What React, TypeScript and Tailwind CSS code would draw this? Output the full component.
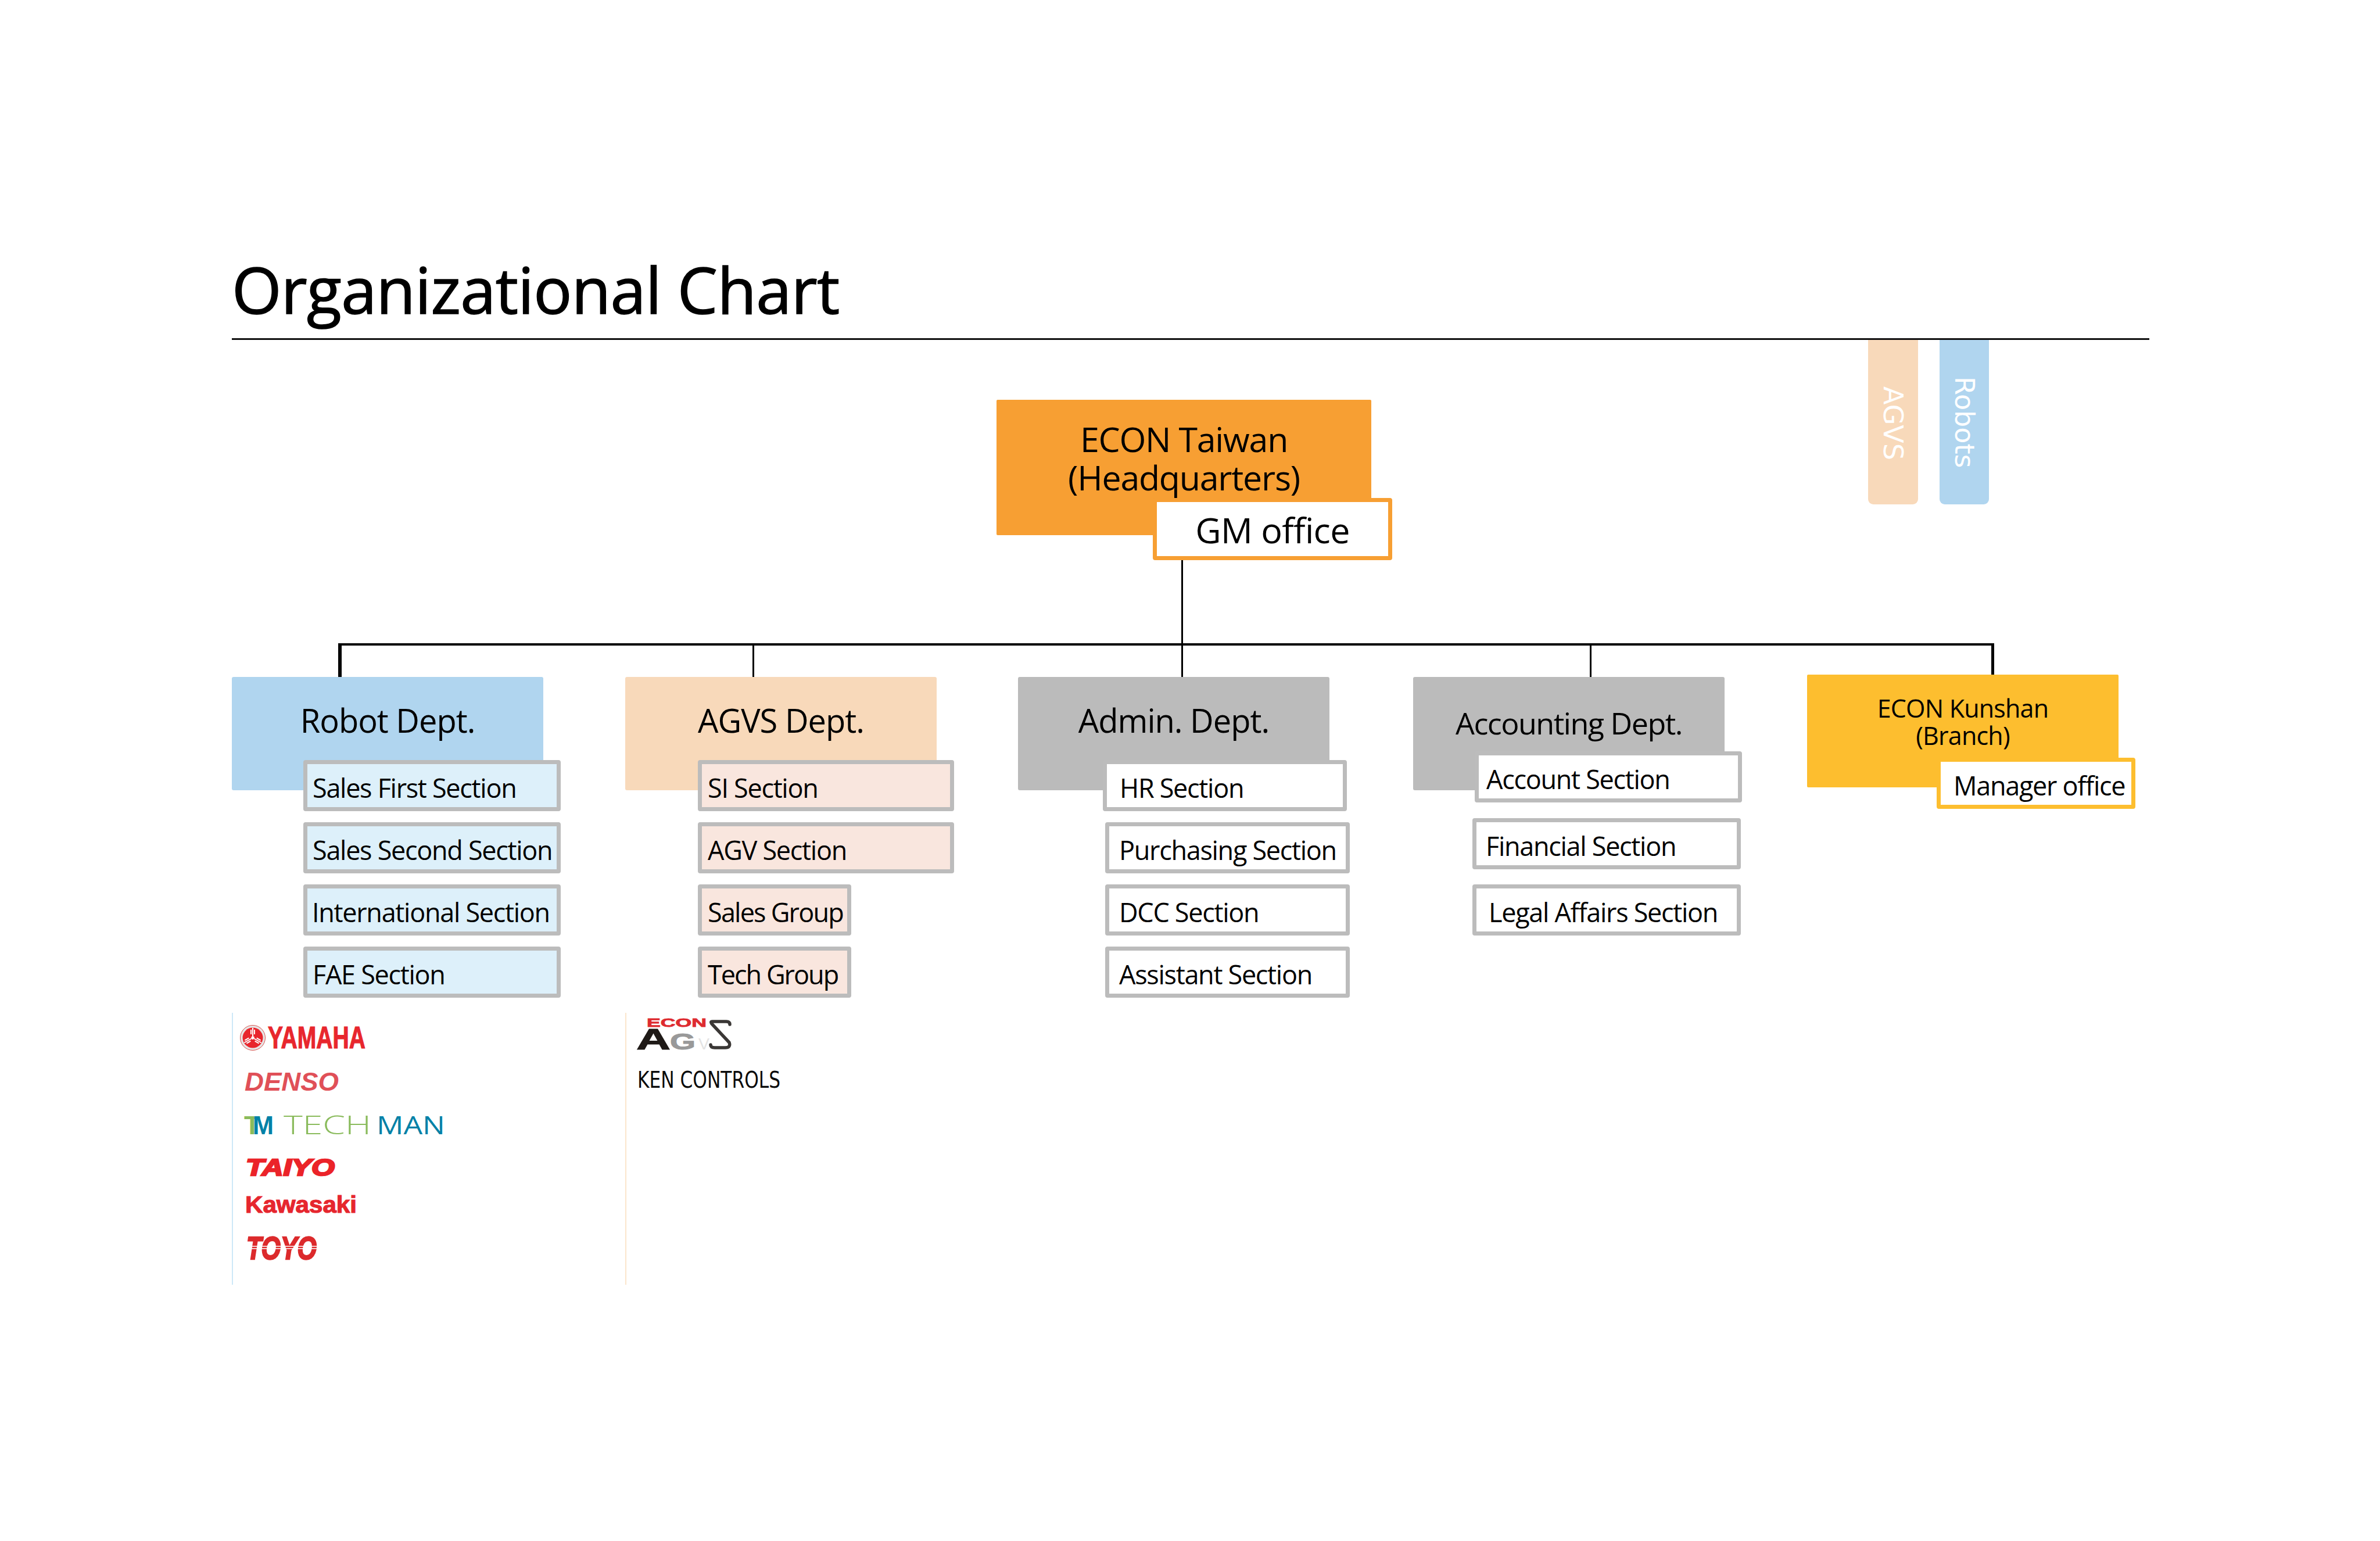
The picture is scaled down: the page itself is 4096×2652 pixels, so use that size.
const Section = ({ className, children }: { className: string; children: React.ReactNode }) => (
  <div className={`flex items-center h-[88px] rounded-[4px] border-[7px] pt-[7px] text-[45px] tracking-[-1.3px] text-black whitespace-nowrap ${className}`}>
    {children}
  </div>
);

const Dept = ({ className, children }: { className: string; children: React.ReactNode }) => (
  <div className={`w-[536px] h-[195px] rounded-[3px] pt-[38px] text-center leading-[72px] text-black ${className}`}>
    {children}
  </div>
);

const YamahaLogo = () => (
  <svg viewBox="0 0 216 44" className="w-[216px] h-[44px] ml-[12px] overflow-visible">
    <circle cx="22" cy="22" r="21.5" fill="#e6e6e6" stroke="#d9534f" strokeWidth="1" />
    <circle cx="22" cy="22" r="17.5" fill="#e8262d" />
    <g stroke="#ffffff" strokeWidth="2" fill="none">
      <path d="M22 25V5M19 8v8M25 8v8" />
      <g transform="rotate(120 22 22)">
        <path d="M22 25V5M19 8v8M25 8v8" />
      </g>
      <g transform="rotate(240 22 22)">
        <path d="M22 25V5M19 8v8M25 8v8" />
      </g>
    </g>
    <text x="48" y="40" fontFamily="Liberation Sans" fontWeight="700" fontSize="53" textLength="168" lengthAdjust="spacingAndGlyphs" stroke="#e8262d" strokeWidth="1.2" fill="#e8262d">YAMAHA</text>
  </svg>
);

const BrandText = ({ className, width, height, size, fill, family, bold, italic, heavy, children }: { className: string; width: number; height: number; size: number; fill: string; family?: string; bold?: boolean; italic?: boolean; heavy?: number; children: string }) => (
  <svg viewBox={`0 0 ${width} ${height}`} className={className}>
    <text x="0" y={height} fontFamily={family || "Liberation Sans"} fontWeight={bold ? 700 : 400} fontStyle={italic ? "italic" : "normal"} fontSize={size} textLength={width} lengthAdjust="spacingAndGlyphs" stroke={fill} strokeWidth={heavy || 0} fill={fill}>
      {children}
    </text>
  </svg>
);

const TechmanLogo = () => (
  <svg viewBox="0 0 344 32" className="w-[344px] h-[32px] ml-[19px] mt-[43px] overflow-visible">
    <text x="0" y="32" fontFamily="Liberation Sans" fontWeight="700" fontSize="45" textLength="28" lengthAdjust="spacingAndGlyphs" fill="#8abb5c">T</text>
    <text x="15" y="32" fontFamily="Liberation Sans" fontWeight="700" fontSize="45" textLength="36" lengthAdjust="spacingAndGlyphs" fill="#0081a7">M</text>
    <text x="68" y="32" fontFamily="Open Sans" fontWeight="300" fontSize="44" textLength="151" lengthAdjust="spacingAndGlyphs" fill="#8abb5c">TECH</text>
    <text x="228" y="32" fontFamily="Open Sans" fontWeight="500" fontSize="44" textLength="118" lengthAdjust="spacingAndGlyphs" fill="#0081a7">MAN</text>
  </svg>
);

const ToyoLogo = () => (
  <svg viewBox="0 0 121 41" className="w-[121px] h-[41px] ml-[23px] mt-[40px] overflow-visible">
    <text x="0" y="40" fontFamily="Liberation Sans" fontWeight="700" fontStyle="italic" fontSize="56" textLength="121" lengthAdjust="spacingAndGlyphs" stroke="#dc2a2c" strokeWidth="2.5" fill="#dc2a2c">TOYO</text>
    <rect x="0" y="17" width="121" height="1.5" fill="#ffffff" />
    <rect x="0" y="21" width="121" height="1.5" fill="#ffffff" />
  </svg>
);

const AgvsLogo = () => (
  <svg viewBox="0 0 166 56" className="w-[166px] h-[56px] overflow-visible">
    <text x="18" y="15" fontFamily="Liberation Sans" fontWeight="700" fontSize="21" textLength="103" lengthAdjust="spacingAndGlyphs" stroke="#de2b30" strokeWidth="0.8" fill="#de2b30">ECON</text>
    <text x="0" y="54" fontFamily="Liberation Sans" fontWeight="700" fontSize="50" textLength="59" lengthAdjust="spacingAndGlyphs" stroke="#1f1a17" strokeWidth="1" fill="#1f1a17">A</text>
    <text x="58" y="54" fontFamily="Liberation Sans" fontWeight="700" fontSize="38" textLength="44" lengthAdjust="spacingAndGlyphs" stroke="#999999" strokeWidth="1" fill="#999999">G</text>
    <text x="107" y="54" fontFamily="Liberation Sans" fontSize="28" textLength="19" lengthAdjust="spacingAndGlyphs" fill="#e3e3e3">V</text>
    <path d="M161 11Q161 6 155 6H131Q127 6 130 10L160 42Q163 51 153 51H135Q128 51 128 46" fill="none" stroke="#3a3735" strokeWidth="5.5" strokeLinecap="round" />
  </svg>
);

const App = () => {
  return (
    <div className="w-[4096px] h-[2652px] bg-white pl-[399px] pt-[412px] overflow-hidden font-['Open_Sans','Noto_Sans',sans-serif]">
      <h1 className="text-[110px] leading-[170px] tracking-[-0.7px] text-black [-webkit-text-stroke:1.5px_black]">Organizational Chart</h1>
      <div className="w-[3300px] h-[3px] bg-[#111111]" />

      <div className="relative w-[3300px]">
        {/* connector lines */}
        <div className="absolute left-[183px] top-[522px] w-[2848px] h-[4px] bg-black" />
        <div className="absolute left-[183px] top-[522px] w-[6px] h-[58px] bg-black" />
        <div className="absolute left-[896px] top-[522px] w-[3px] h-[58px] bg-black" />
        <div className="absolute left-[1634px] top-[375px] w-[3px] h-[205px] bg-black" />
        <div className="absolute left-[2337px] top-[522px] w-[3px] h-[58px] bg-black" />
        <div className="absolute left-[3028px] top-[522px] w-[5px] h-[58px] bg-black" />

        <div className="flex items-start h-[580px]">
          <div className="relative ml-[1316px] mt-[103px] w-[645px] h-[233px] rounded-[2px] bg-[#f79f33] pt-[34px] text-center text-[59px] leading-[66px] tracking-[-1.2px] text-black">
            ECON Taiwan
            <br />
            (Headquarters)
            <div className="absolute left-[269px] top-[169px] flex items-center justify-center w-[412px] h-[107px] rounded-[4px] border-[7px] border-[#f79f33] bg-white pt-[3px] text-[61px] tracking-[-0.7px]">
              GM office
            </div>
          </div>
          <div className="ml-[855px] flex gap-[37px]">
            <div className="flex items-center justify-center w-[86px] h-[283px] rounded-b-[9px] bg-[#f8d9ba]">
              <span className="[writing-mode:vertical-rl] mt-[4px] font-['DejaVu_Sans',sans-serif] text-[46px] leading-none text-white">AGVS</span>
            </div>
            <div className="flex items-center justify-center w-[85px] h-[283px] rounded-b-[9px] bg-[#b0d5ef]">
              <span className="[writing-mode:vertical-rl] font-['DejaVu_Sans',sans-serif] text-[46px] leading-none text-white">Robots</span>
            </div>
          </div>
        </div>

        <div className="flex items-start">
          {/* Robot */}
          <div className="w-[677px] shrink-0">
            <Dept className="bg-[#b0d5ef] text-[56px] tracking-[-1px]">Robot Dept.</Dept>
            <div className="relative -mt-[52px] ml-[123px] flex w-[443px] flex-col gap-[19px]">
              <Section className="border-[#bcbcbc] bg-[#ddf0fa] pl-[9px]">Sales First Section</Section>
              <Section className="border-[#bcbcbc] bg-[#ddf0fa] pl-[9px]">Sales Second Section</Section>
              <Section className="border-[#bcbcbc] bg-[#ddf0fa] pl-[8px]">International Section</Section>
              <Section className="border-[#bcbcbc] bg-[#ddf0fa] pl-[9px]">FAE Section</Section>
            </div>
            <div className="mt-[26px] h-[468px] border-l-2 border-[#cde8f8] pt-[21px]">
              <YamahaLogo />
              <BrandText className="w-[162px] h-[31px] ml-[20px] mt-[38px] overflow-visible" width={162} height={31} size={44} fill="#e05058" bold italic>DENSO</BrandText>
              <TechmanLogo />
              <BrandText className="w-[153px] h-[28px] ml-[22px] mt-[43px] overflow-visible" width={153} height={28} size={40} fill="#eb2329" bold italic heavy={2.5}>TAIYO</BrandText>
              <BrandText className="w-[192px] h-[30px] ml-[21px] mt-[34px] overflow-visible" width={192} height={30} size={41} fill="#e6262e" bold heavy={1.2}>Kawasaki</BrandText>
              <ToyoLogo />
            </div>
          </div>

          {/* AGVS */}
          <div className="w-[676px] shrink-0">
            <Dept className="bg-[#f8d9ba] text-[56px] tracking-[-1px]">AGVS Dept.</Dept>
            <div className="relative -mt-[52px] ml-[125px] flex w-[441px] flex-col items-start gap-[19px]">
              <Section className="w-[441px] border-[#bcbcbc] bg-[#f9e6de] pl-[10px]">SI Section</Section>
              <Section className="w-[441px] border-[#bcbcbc] bg-[#f9e6de] pl-[10px]">AGV Section</Section>
              <Section className="w-[264px] border-[#bcbcbc] bg-[#f9e6de] pl-[10px] !tracking-[-1.8px]">Sales Group</Section>
              <Section className="w-[264px] border-[#bcbcbc] bg-[#f9e6de] pl-[10px] !tracking-[-2px]">Tech Group</Section>
            </div>
            <div className="mt-[26px] h-[468px] border-l-2 border-[#fbe6cc] pt-[9px]">
              <div className="ml-[17px]">
                <AgvsLogo />
              </div>
              <BrandText className="w-[246px] h-[28px] ml-[19px] mt-[36px] overflow-visible" width={246} height={28} size={39} fill="#0a0a0a" family="DejaVu Sans">KEN CONTROLS</BrandText>
            </div>
          </div>

          {/* Admin */}
          <div className="w-[680px] shrink-0">
            <Dept className="bg-[#bbbbbb] text-[56px] tracking-[-1px]">Admin. Dept.</Dept>
            <div className="relative -mt-[52px] flex flex-col items-start gap-[19px]">
              <Section className="ml-[146px] w-[420px] border-[#bcbcbc] bg-white pl-[22px]">HR Section</Section>
              <Section className="ml-[150px] w-[421px] border-[#bcbcbc] bg-white pl-[17px]">Purchasing Section</Section>
              <Section className="ml-[150px] w-[421px] border-[#bcbcbc] bg-white pl-[17px]">DCC Section</Section>
              <Section className="ml-[150px] w-[421px] border-[#bcbcbc] bg-white pl-[17px]">Assistant Section</Section>
            </div>
          </div>

          {/* Accounting */}
          <div className="w-[678px] shrink-0">
            <Dept className="bg-[#bbbbbb] pt-[43px] text-[52px] tracking-[-1.5px]">Accounting Dept.</Dept>
            <div className="relative -mt-[67px] flex flex-col items-start">
              <Section className="ml-[106px] w-[460px] border-[#bcbcbc] bg-white pl-[13px]">Account Section</Section>
              <Section className="ml-[102px] mt-[27px] w-[462px] border-[#bcbcbc] bg-white pl-[16px]">Financial Section</Section>
              <Section className="ml-[102px] mt-[26px] w-[462px] border-[#bcbcbc] bg-white pl-[21px]">Legal Affairs Section</Section>
            </div>
          </div>

          {/* Branch */}
          <div className="relative -mt-[4px] w-[536px] shrink-0">
            <div className="h-[194px] w-[536px] rounded-[2px] bg-[#fdbe2f] pt-[34px] text-center text-[43px] leading-[47px] tracking-[-0.8px] text-black">
              ECON Kunshan
              <br />
              (Branch)
            </div>
            <Section className="absolute left-[223px] top-[143px] w-[342px] border-[#fdbe2f] bg-white pl-[22px] !h-[88px]">Manager office</Section>
          </div>
        </div>
      </div>
    </div>
  );
};

export default App;
